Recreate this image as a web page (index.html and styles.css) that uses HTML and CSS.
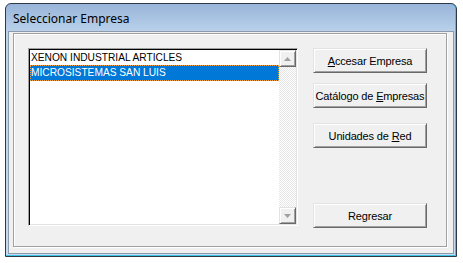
FILE: index.html
```html
<!DOCTYPE html>
<html lang="es">
<head>
    <meta charset="UTF-8">
    <title>Seleccionar Empresa</title>
    <link rel="stylesheet" href="styles.css">
</head>
<body>
    <div class="window">
        <div class="titlebar">
            <span class="title">Seleccionar Empresa</span>
        </div>
        <div class="client">
            <div class="frame">
                <div class="listbox">
                    <div class="items">
                        <div class="item">XENON INDUSTRIAL ARTICLES</div>
                        <div class="item selected">MICROSISTEMAS SAN LUIS</div>
                    </div>
                    <div class="scrollbar">
                        <div class="sb-btn">
                            <svg width="7" height="4" viewBox="0 0 7 4"><path d="M3.5 0 L7 4 L0 4 Z" fill="#a0a0a0"/></svg>
                        </div>
                        <div class="sb-track"></div>
                        <div class="sb-btn">
                            <svg width="7" height="4" viewBox="0 0 7 4"><path d="M0 0 L7 0 L3.5 4 Z" fill="#a0a0a0"/></svg>
                        </div>
                    </div>
                </div>
                <div class="buttons">
                    <button class="btn"><u>A</u>ccesar Empresa</button>
                    <button class="btn btn-catalogo">Catálogo de <u>E</u>mpresas</button>
                    <button class="btn btn-unidades">Unidades de <u>R</u>ed</button>
                    <button class="btn btn-regresar">Regresar</button>
                </div>
            </div>
        </div>
    </div>
</body>
</html>
```

FILE: styles.css
```css
body {
    margin: 0;
    background: #fff;
    font-family: "Liberation Sans", Arial, sans-serif;
}

.window {
    box-sizing: border-box;
    width: 452px;
    height: 254px;
    margin: 3px 0 0 5px;
    border: 1px solid #2f3a48;
    border-radius: 6px 6px 0 0;
    background: linear-gradient(#98b4d9, #bcd4ec 30px, #c4dbf0);
    padding: 0 2px 2px 2px;
    display: flex;
    flex-direction: column;
    box-shadow: inset 0 -1px 0 #3fc3e6, inset -1px 0 0 #3fc3e6;
}

.titlebar {
    height: 27px;
    display: flex;
    align-items: center;
    padding-left: 5px;
}

.title {
    font-family: "Noto Sans", "Open Sans", sans-serif;
    font-size: 12px;
    color: #000;
    margin-top: 1px;
}

.client {
    flex: 1;
    background: #f0f0f0;
    border: 1px solid #8c9aac;
    padding: 1px 0 0 4px;
}

.frame {
    box-sizing: border-box;
    width: 434px;
    height: 214px;
    border: 1px solid #a0a0a0;
    box-shadow: inset 1px 1px 0 #fff, 1px 1px 0 #fff;
    padding: 14px 0 0 14px;
    display: flex;
    align-items: flex-start;
}

.listbox {
    box-sizing: border-box;
    width: 270px;
    height: 178px;
    border: 1px solid;
    border-color: #a0a0a0 #fff #fff #a0a0a0;
    box-shadow: inset 1px 1px 0 #000, inset -1px -1px 0 #e3e3e3;
    background: #fff;
    padding: 1px;
    display: flex;
}

.items {
    flex: 1;
}

.item {
    height: 15px;
    line-height: 15px;
    font-size: 10.2px;
    color: #000;
    padding-left: 1px;
    white-space: nowrap;
}

.item.selected {
    height: 16px;
    line-height: 16px;
    background: #0078d7;
    color: #fff;
    outline: 1px dotted #f0a040;
    outline-offset: -1px;
}

.scrollbar {
    width: 17px;
    display: flex;
    flex-direction: column;
}

.sb-btn {
    box-sizing: border-box;
    height: 17px;
    background: #f0f0f0;
    border: 1px solid;
    border-color: #e3e3e3 #696969 #696969 #e3e3e3;
    box-shadow: inset 1px 1px 0 #fff, inset -1px -1px 0 #a0a0a0;
    display: flex;
    align-items: center;
    justify-content: center;
}

.sb-track {
    flex: 1;
    background: repeating-conic-gradient(#fff 0 25%, #e6e6e6 0 50%) 0 0 / 2px 2px;
}

.buttons {
    display: flex;
    flex-direction: column;
    margin-left: 15px;
}

.btn {
    box-sizing: border-box;
    width: 114px;
    height: 25px;
    padding: 0;
    background: #f0f0f0;
    border: 1px solid;
    border-color: #e3e3e3 #696969 #696969 #e3e3e3;
    box-shadow: inset 1px 1px 0 #fff, inset -1px -1px 0 #a0a0a0;
    font-family: "Liberation Sans", Arial, sans-serif;
    font-size: 11px;
    letter-spacing: -0.15px;
    color: #000;
    white-space: nowrap;
}

.btn u {
    text-decoration-thickness: 1px;
    text-underline-offset: 1px;
}

.btn-catalogo {
    margin-top: 10px;
}

.btn-unidades {
    margin-top: 15px;
}

.btn-regresar {
    margin-top: 55px;
}
```
